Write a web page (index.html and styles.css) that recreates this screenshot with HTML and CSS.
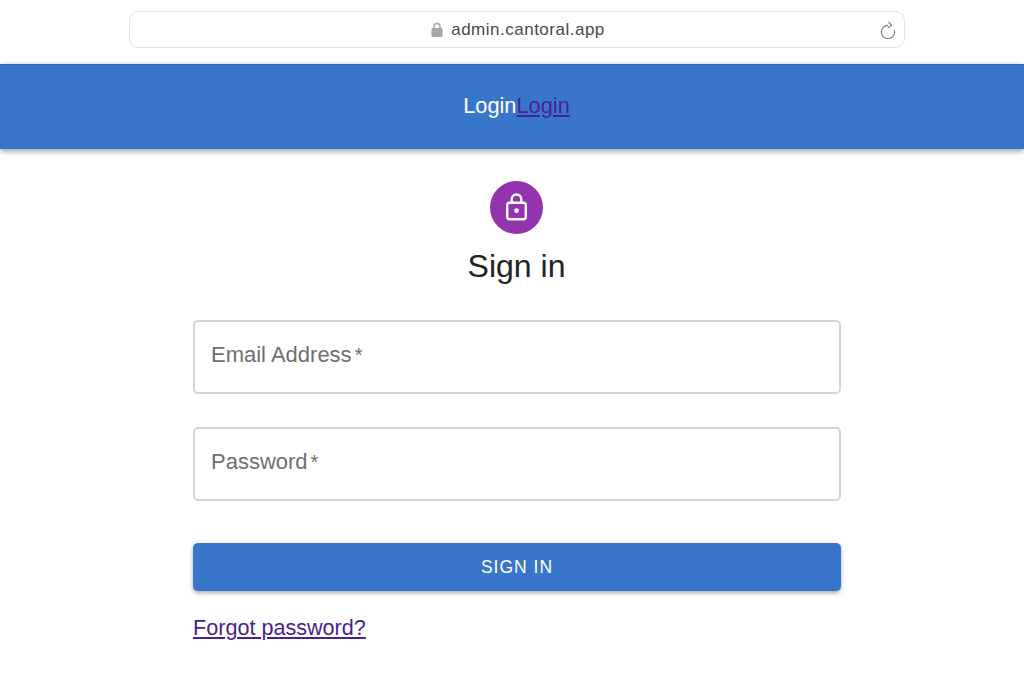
FILE: index.html
```html
<!DOCTYPE html>
<html lang="en">
<head>
    <meta charset="UTF-8">
    <meta name="viewport" content="width=device-width, initial-scale=1.0">
    <title>Sign in</title>
    <link rel="stylesheet" href="styles.css">
</head>
<body>
    <div class="browserBar">
        <div class="urlBox">
            <svg class="urlLock" width="12" height="15" viewBox="0 0 12 15">
                <path d="M3 7V4.5a3 3 0 0 1 6 0V7" fill="none" stroke="#a6a6a6" stroke-width="1.5"/>
                <rect x="0.5" y="6" width="11" height="9" rx="1.5" fill="#a6a6a6"/>
            </svg>
            <span class="urlText">admin.cantoral.app</span>
            <svg class="urlReload" width="16" height="18" viewBox="0 0 16 18">
                <path d="M8 4.4a6.6 6.6 0 1 0 6.3 4.6" fill="none" stroke="#7d7d7d" stroke-width="1.1"/>
                <path d="M8.5 1l3 3.2-3.5 2.6" fill="none" stroke="#7d7d7d" stroke-width="1.1"/>
            </svg>
        </div>
    </div>

    <header class="appBar">
        <span>Login</span><a href="#">Login</a>
    </header>

    <main class="content">
        <div class="avatar">
            <svg width="21" height="28" viewBox="0 0 21 28">
                <path d="M5.7 10V6.3a4.8 4.8 0 0 1 9.6 0V10" fill="none" stroke="#fff" stroke-width="2.4"/>
                <rect x="1.2" y="9.7" width="18.6" height="16.6" rx="2.5" fill="none" stroke="#fff" stroke-width="2.4"/>
                <circle cx="10.5" cy="17.7" r="2.4" fill="#fff"/>
            </svg>
        </div>
        <h1>Sign in</h1>
        <form class="loginForm">
            <div class="field"><span class="fieldLabel">Email Address<i>*</i></span></div>
            <div class="field"><span class="fieldLabel">Password<i>*</i></span></div>
            <button type="button" class="submitBtn">SIGN IN</button>
            <a class="forgot" href="#">Forgot password?</a>
        </form>
    </main>
</body>
</html>
```

FILE: styles.css
```css
* {
    box-sizing: border-box;
}
body {
    margin: 0;
    background: #fff;
    font-family: "Liberation Sans", Arial, sans-serif;
    color: #222;
}
.browserBar {
    height: 64px;
    padding: 11px 0 0 10px;
    display: flex;
    justify-content: center;
}
.urlBox {
    position: relative;
    width: 776px;
    height: 37px;
    border: 1px solid #e2e2e2;
    border-radius: 10px;
    display: flex;
    align-items: center;
    justify-content: center;
    gap: 8px;
}
.urlLock {
    margin-left: 2px;
}
.urlText {
    font-size: 17px;
    color: #4a4a4a;
    letter-spacing: 0.5px;
}
.urlReload {
    position: absolute;
    right: 8px;
    top: 9px;
}
.appBar {
    height: 85px;
    padding: 0 0 2px 9px;
    background: #3876cc;
    border-top: 1px solid #2f66b3;
    box-shadow: 0 2px 6px rgba(0, 0, 0, 0.4);
    display: flex;
    align-items: center;
    justify-content: center;
    font-size: 21.8px;
    color: #fff;
}
.appBar a {
    color: #4a1f9e;
}
.content {
    display: flex;
    flex-direction: column;
    align-items: center;
    padding: 32px 0 0 9px;
}
.avatar {
    width: 53px;
    height: 53px;
    border-radius: 50%;
    background: #9334ae;
    display: flex;
    align-items: center;
    justify-content: center;
}
.avatar svg {
    margin-top: -1px;
}
h1 {
    margin: 11px 0 0;
    font-size: 32px;
    font-weight: 400;
    line-height: 42px;
    color: #222;
}
.loginForm {
    width: 648px;
    margin: 33px 0 0 1px;
    display: flex;
    flex-direction: column;
}
.field {
    height: 74px;
    margin-bottom: 33px;
    border: 2px solid #d4d4d4;
    border-radius: 5px;
    padding: 21px 0 0 16px;
}
.fieldLabel {
    font-size: 22px;
    line-height: 24px;
    color: #6f6f6f;
    display: block;
}
.fieldLabel i {
    font-style: normal;
    font-size: 20px;
    margin-left: 3px;
}
.submitBtn {
    height: 48px;
    margin-top: 9px;
    border: none;
    border-radius: 5px;
    background: #3876cc;
    color: #fff;
    font-family: inherit;
    font-size: 17.5px;
    letter-spacing: 1px;
    box-shadow: 0 2px 4px rgba(0, 0, 0, 0.35);
}
.forgot {
    margin-top: 24px;
    align-self: flex-start;
    font-size: 21.6px;
    color: #4a1f8e;
}
```
